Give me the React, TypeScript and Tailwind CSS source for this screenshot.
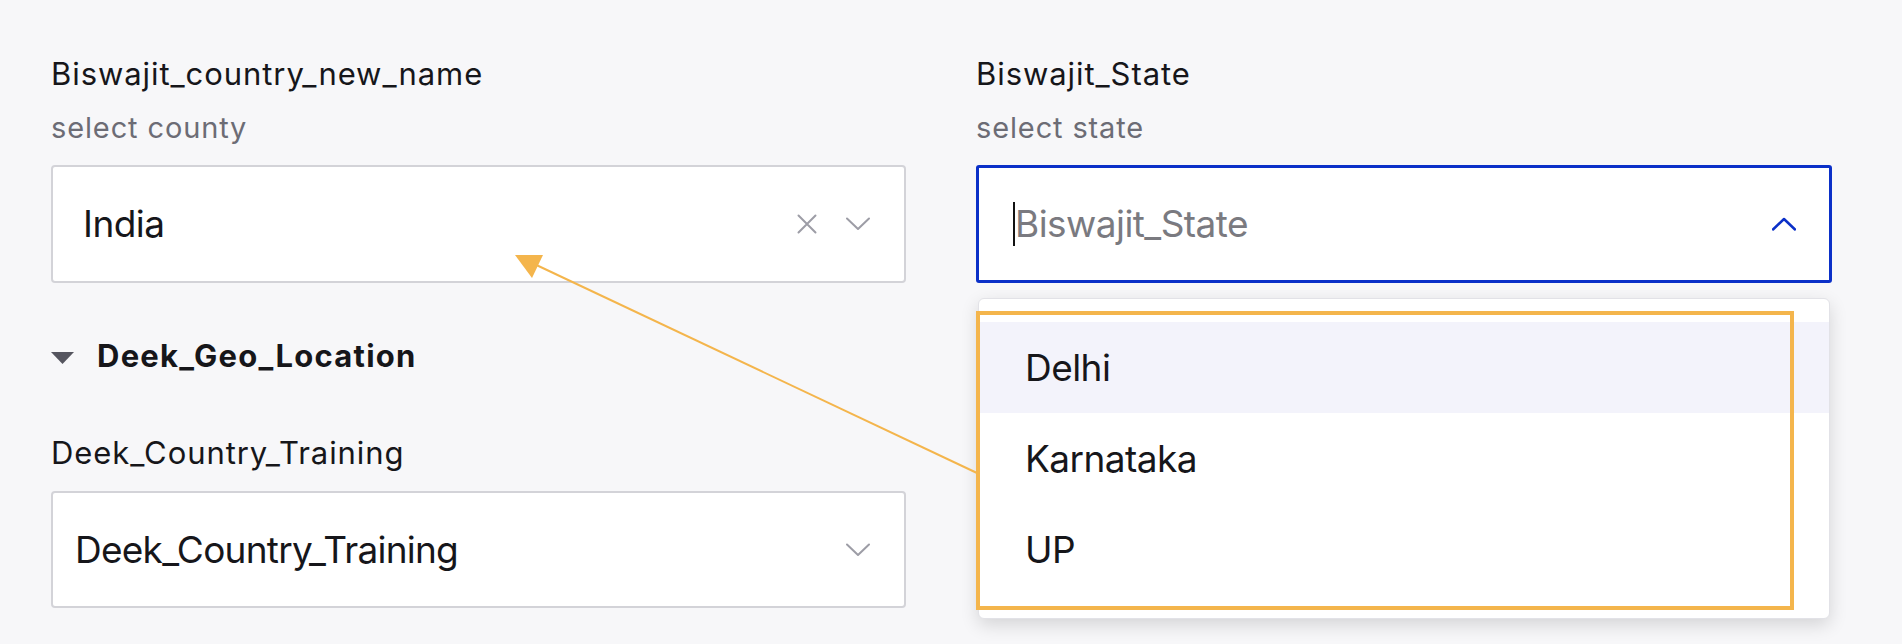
import React from "react";

const ChevronDown = ({ className = "" }: { className?: string }) => (
  <svg className={className} width="24" height="14" viewBox="0 0 24 14" fill="none">
    <polyline points="1,1.5 12,12 23,1.5" stroke="currentColor" strokeWidth="2" strokeLinecap="round" strokeLinejoin="round" />
  </svg>
);

const ChevronUp = ({ className = "" }: { className?: string }) => (
  <svg className={className} width="24" height="14" viewBox="0 0 24 14" fill="none">
    <polyline points="1,12.5 12,2 23,12.5" stroke="currentColor" strokeWidth="2.5" strokeLinecap="round" strokeLinejoin="round" />
  </svg>
);

const XIcon = ({ className = "" }: { className?: string }) => (
  <svg className={className} width="20" height="20" viewBox="0 0 20 20" fill="none">
    <path d="M1.5 1.5 L18.5 18.5 M18.5 1.5 L1.5 18.5" stroke="currentColor" strokeWidth="2" strokeLinecap="round" />
  </svg>
);

const font = { fontFamily: "Inter, 'Noto Sans', sans-serif" };

export default function App() {
  return (
    <div className="relative w-[1902px] h-[644px] overflow-hidden bg-[#f7f7f9] text-[#16161a]" style={font}>
      <div className="flex gap-[70px] pl-[51px] pt-[56px]">
        {/* Left column */}
        <div className="flex w-[855px] flex-col">
          <div className="text-[31px] leading-[36px] tracking-[0.03em]">Biswajit_country_new_name</div>
          <div className="mt-[19px] text-[29px] leading-[34px] text-[#6c6c75] tracking-[0.03em]">select county</div>
          <div className="mt-[20px] flex h-[118px] items-center rounded-[4px] border-2 border-[#d3d3d8] bg-white pl-[30px] pr-[34px]">
            <span className="flex-1 text-[37px] leading-[44px] tracking-[-0.015em]">India</span>
            <XIcon className="text-[#9d9da6]" />
            <ChevronDown className="ml-[29px] text-[#9d9da6]" />
          </div>
          <div className="mt-[55px] flex items-center">
            <svg width="23" height="12" viewBox="0 0 23 12" className="mt-[4px]">
              <polygon points="0,0 23,0 11.5,12" fill="#55555f" />
            </svg>
            <span className="ml-[23px] text-[31px] font-bold leading-[36px] tracking-[0.04em]">Deek_Geo_Location</span>
          </div>
          <div className="mt-[61px] text-[31px] leading-[36px] tracking-[0.03em]">Deek_Country_Training</div>
          <div className="mt-[20px] flex h-[117px] items-center rounded-[4px] border-2 border-[#d3d3d8] bg-white pl-[22px] pr-[34px]">
            <span className="flex-1 text-[37px] leading-[44px] tracking-[-0.02em]">Deek_Country_Training</span>
            <ChevronDown className="text-[#9d9da6]" />
          </div>
        </div>

        {/* Right column */}
        <div className="relative flex w-[856px] flex-col">
          <div className="text-[31px] leading-[36px] tracking-[0.03em]">Biswajit_State</div>
          <div className="mt-[19px] text-[29px] leading-[34px] text-[#6c6c75] tracking-[0.03em]">select state</div>
          <div className="mt-[20px] flex h-[118px] items-center rounded-[3px] border-[3px] border-[#0b30c8] bg-white pl-[34px] pr-[33px]">
            <span className="h-[44px] w-[2px] bg-[#111]" />
            <span className="flex-1 text-[37px] leading-[44px] tracking-[-0.015em] text-[#7a7a80]">Biswajit_State</span>
            <ChevronUp className="text-[#0b30c8]" />
          </div>

          {/* Dropdown menu */}
          <div className="absolute left-[2px] top-[242px] w-[852px] rounded-[6px] border border-[#e2e2e7] bg-white py-[23px] shadow-[0_6px_18px_rgba(0,0,0,0.14)]">
            <div className="flex h-[91px] items-center bg-[#f3f3fb] pl-[46px] text-[37px] tracking-[-0.015em]">Delhi</div>
            <div className="flex h-[91px] items-center pl-[46px] text-[37px] tracking-[-0.015em]">Karnataka</div>
            <div className="flex h-[91px] items-center pl-[46px] text-[37px] tracking-[-0.015em]">UP</div>
          </div>
        </div>
      </div>

      {/* Annotation: highlight rectangle */}
      <div className="pointer-events-none absolute left-[976px] top-[311px] h-[299px] w-[818px] border-[4px] border-[#f4b54c]" />

      {/* Annotation: arrow */}
      <svg className="pointer-events-none absolute left-0 top-0" width="1902" height="644">
        <line x1="977" y1="473" x2="530" y2="262" stroke="#f4b54c" strokeWidth="2" />
        <polygon points="515,255 543,255 532,278" fill="#f4b54c" />
      </svg>
    </div>
  );
}
